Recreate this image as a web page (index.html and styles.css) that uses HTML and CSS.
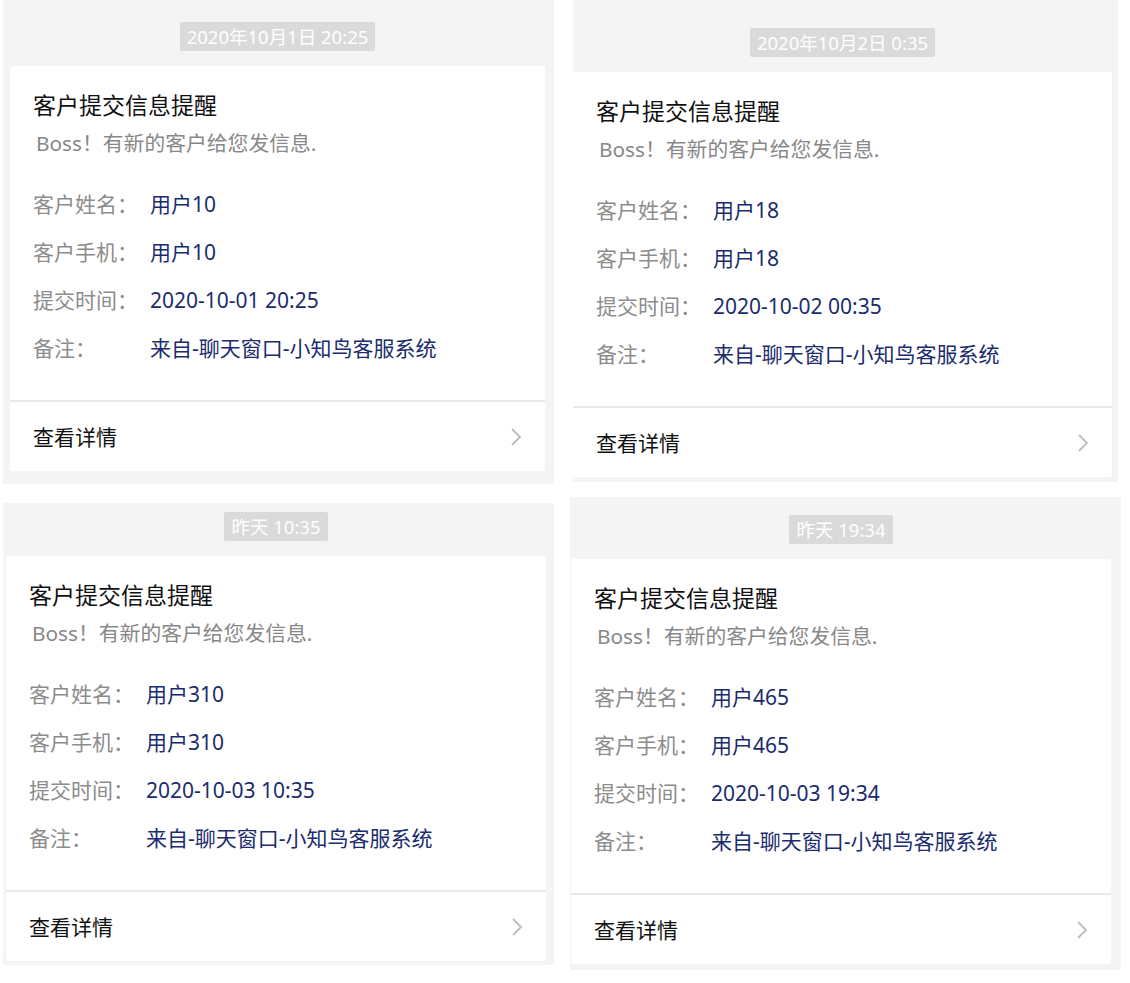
FILE: index.html
```html
<!DOCTYPE html>
<html>
  <head>
    <title>客户提交信息提醒</title>
    <meta charset="utf-8" />
    <meta name="viewport" content="width=device-width" />
    <link rel="stylesheet" href="styles.css">
  </head>

  <body>
    <div class="row">
      <div class="panel panel_a">
        <div class="time_box"><span class="time">2020年10月1日 20:25</span></div>
        <div class="card">
          <div class="card_body">
            <div class="title">客户提交信息提醒</div>
            <div class="desc">Boss！有新的客户给您发信息.</div>
            <div class="fields">
              <div class="field"><span class="label">客户姓名：</span><span class="value">用户10</span></div>
              <div class="field"><span class="label">客户手机：</span><span class="value">用户10</span></div>
              <div class="field"><span class="label">提交时间：</span><span class="value">2020-10-01 20:25</span></div>
              <div class="field"><span class="label">备注：</span><span class="value">来自-聊天窗口-小知鸟客服系统</span></div>
            </div>
          </div>
          <div class="card_footer">
            <span>查看详情</span>
            <svg class="arrow" width="12" height="20" viewBox="0 0 12 20"><polyline points="2,2 10,10 2,18" /></svg>
          </div>
        </div>
      </div>

      <div class="panel panel_b">
        <div class="time_box"><span class="time">2020年10月2日 0:35</span></div>
        <div class="card">
          <div class="card_body">
            <div class="title">客户提交信息提醒</div>
            <div class="desc">Boss！有新的客户给您发信息.</div>
            <div class="fields">
              <div class="field"><span class="label">客户姓名：</span><span class="value">用户18</span></div>
              <div class="field"><span class="label">客户手机：</span><span class="value">用户18</span></div>
              <div class="field"><span class="label">提交时间：</span><span class="value">2020-10-02 00:35</span></div>
              <div class="field"><span class="label">备注：</span><span class="value">来自-聊天窗口-小知鸟客服系统</span></div>
            </div>
          </div>
          <div class="card_footer">
            <span>查看详情</span>
            <svg class="arrow" width="12" height="20" viewBox="0 0 12 20"><polyline points="2,2 10,10 2,18" /></svg>
          </div>
        </div>
      </div>
    </div>

    <div class="row">
      <div class="panel panel_c">
        <div class="time_box"><span class="time">昨天 10:35</span></div>
        <div class="card">
          <div class="card_body">
            <div class="title">客户提交信息提醒</div>
            <div class="desc">Boss！有新的客户给您发信息.</div>
            <div class="fields">
              <div class="field"><span class="label">客户姓名：</span><span class="value">用户310</span></div>
              <div class="field"><span class="label">客户手机：</span><span class="value">用户310</span></div>
              <div class="field"><span class="label">提交时间：</span><span class="value">2020-10-03 10:35</span></div>
              <div class="field"><span class="label">备注：</span><span class="value">来自-聊天窗口-小知鸟客服系统</span></div>
            </div>
          </div>
          <div class="card_footer">
            <span>查看详情</span>
            <svg class="arrow" width="12" height="20" viewBox="0 0 12 20"><polyline points="2,2 10,10 2,18" /></svg>
          </div>
        </div>
      </div>

      <div class="panel panel_d">
        <div class="time_box"><span class="time">昨天 19:34</span></div>
        <div class="card">
          <div class="card_body">
            <div class="title">客户提交信息提醒</div>
            <div class="desc">Boss！有新的客户给您发信息.</div>
            <div class="fields">
              <div class="field"><span class="label">客户姓名：</span><span class="value">用户465</span></div>
              <div class="field"><span class="label">客户手机：</span><span class="value">用户465</span></div>
              <div class="field"><span class="label">提交时间：</span><span class="value">2020-10-03 19:34</span></div>
              <div class="field"><span class="label">备注：</span><span class="value">来自-聊天窗口-小知鸟客服系统</span></div>
            </div>
          </div>
          <div class="card_footer">
            <span>查看详情</span>
            <svg class="arrow" width="12" height="20" viewBox="0 0 12 20"><polyline points="2,2 10,10 2,18" /></svg>
          </div>
        </div>
      </div>
    </div>
  </body>
</html>
```

FILE: styles.css
```css
* {
  margin: 0;
  padding: 0;
  box-sizing: border-box;
}

body {
  background-color: white;
  color: #111;
  font-family: "Noto Sans", "Noto Sans CJK SC", sans-serif;
  font-size: 21px;
}

.row {
  display: flex;
  align-items: flex-start;
}

.panel {
  background-color: #f4f4f4;
  width: 551px;
}

/* each screenshot was cropped a bit differently */
.panel_a {
  margin-left: 3px;
  height: 484px;
  padding: 22px 9px 0 7px;
}

.panel_b {
  margin-left: 19px;
  width: 545px;
  height: 482px;
  padding: 28px 6px 0 0;
}

.panel_c {
  margin-left: 3px;
  margin-top: 19px;
  height: 462px;
  padding: 9px 8px 0 3px;
}

.panel_d {
  margin-left: 16px;
  margin-top: 13px;
  height: 473px;
  padding: 18px 10px 0 1px;
}

.time_box {
  text-align: center;
  height: 29px;
  margin-bottom: 15px;
}

.time {
  display: inline-block;
  background-color: #dadada;
  color: white;
  font-size: 18.5px;
  line-height: 29px;
  height: 29px;
  padding: 0 7px;
  border-radius: 2px;
}

.card {
  background-color: white;
  border-radius: 3px;
}

.card_body {
  padding: 24px 23px 28px 23px;
}

.title {
  font-size: 23px;
  line-height: 30px;
  color: #111;
}

.desc {
  font-size: 20.8px;
  line-height: 30px;
  margin-top: 8px;
  padding-left: 3px;
  color: #888;
}

.fields {
  margin-top: 22px;
}

.field {
  display: flex;
  line-height: 48px;
  height: 48px;
}

.label {
  width: 117px;
  flex-shrink: 0;
  color: #8c8c8c;
}

.value {
  color: #1b2c6e;
}

.card_footer {
  display: flex;
  align-items: center;
  justify-content: space-between;
  height: 71px;
  border-top: 2px solid #e9e9e9;
  padding: 0 23px 0 23px;
  color: #111;
}

.card_footer span {
  margin-top: -2px;
}

.arrow polyline {
  fill: none;
  stroke: #bdbdbd;
  stroke-width: 1.8;
}
```
